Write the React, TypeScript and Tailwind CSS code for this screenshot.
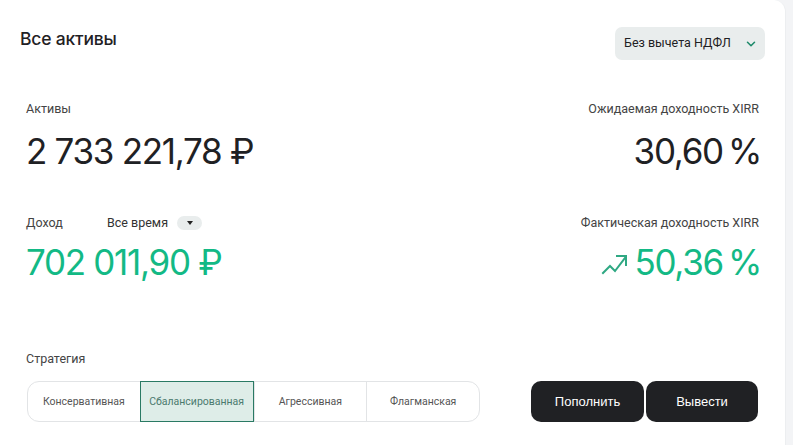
import React from "react";

const roboto = { fontFamily: "Roboto, 'Noto Sans', sans-serif" };
const big = "text-[35px] leading-[40px] tracking-[-1.3px]";

export default function App() {
  const strategies = ["Консервативная", "Сбалансированная", "Агрессивная", "Флагманская"];
  return (
    <div className="w-[793px] h-[445px] bg-[#f3f4f6] overflow-hidden" style={{ fontFamily: "Inter, 'Noto Sans', sans-serif" }}>
      <div className="w-[786px] h-[460px] bg-white rounded-tr-[12px] border-r border-[#eceef0] flex flex-col">
        <div className="flex justify-between items-start pl-[20px] pr-[20px] pt-[27px]">
          <div className="text-[17.5px] font-medium text-[#1f2124] leading-[22px] pt-[1px] tracking-[-0.2px]">Все активы</div>
          <div className="w-[150px] h-[33px] bg-[#e9eded] rounded-[7px] flex items-center justify-between pl-[9px] pr-[7px]">
            <span className="text-[12.5px] text-[#1f2124]" style={roboto}>Без вычета НДФЛ</span>
            <svg width="14" height="14" viewBox="0 0 24 24" fill="none" stroke="#1d8a6a" strokeWidth="2.6" strokeLinecap="round" strokeLinejoin="round">
              <path d="M6 9l6 6 6-6" />
            </svg>
          </div>
        </div>

        <div className="flex justify-between pl-[26px] pr-[26px] mt-[41px]">
          <div className="flex flex-col">
            <div className="text-[12.5px] text-[#444] leading-[16px]" style={roboto}>Активы</div>
            <div className={big + " text-[#1f2124] mt-[14px]"}>2 733 221,78 ₽</div>
          </div>
          <div className="flex flex-col items-end">
            <div className="text-[12.5px] text-[#444] leading-[16px]" style={roboto}>Ожидаемая доходность XIRR</div>
            <div className={big + " text-[#1f2124] mt-[14px] -mr-[2px]"}>30,60{"\u2009"}%</div>
          </div>
        </div>

        <div className="flex justify-between pl-[26px] pr-[26px] mt-[44px]">
          <div className="flex flex-col">
            <div className="flex items-center h-[16px]" style={roboto}>
              <span className="text-[12.5px] text-[#444] w-[81px]">Доход</span>
              <span className="text-[12.5px] text-[#333]">Все время</span>
              <span className="ml-[9px] w-[25px] h-[14px] bg-[#e9eded] rounded-full flex items-center justify-center">
                <svg width="6" height="4" viewBox="0 0 6 4"><path d="M0 0h6L3 4z" fill="#222" /></svg>
              </span>
            </div>
            <div className={big + " text-[#13b985] mt-[11px]"}>702 011,90 ₽</div>
          </div>
          <div className="flex flex-col items-end">
            <div className="text-[12.5px] text-[#444] leading-[16px]" style={roboto}>Фактическая доходность XIRR</div>
            <div className="flex items-center mt-[11px] -mr-[2px]">
              <svg width="27" height="22" viewBox="0 0 27 22" fill="none" stroke="#2fa883" strokeWidth="2" strokeLinecap="square" strokeLinejoin="miter" className="mr-[6px] mt-[4px]">
                <path d="M2 20l7-7 5 5 10-13" />
                <path d="M16 3h9v9" />
              </svg>
              <div className={big + " text-[#13b985]"}>50,36{"\u2009"}%</div>
            </div>
          </div>
        </div>

        <div className="pl-[26px] mt-[69px] text-[12.5px] text-[#444] leading-[16px]" style={roboto}>Стратегия</div>

        <div className="flex items-center pl-[27px] pr-[27px] mt-[14px]">
          <div className="w-[453px] h-[41px] border border-[#e2e4e6] rounded-[12px] flex" style={roboto}>
            {strategies.map((s, i) => {
              const active = i === 1;
              return (
                <div
                  key={s}
                  className={
                    "flex-1 flex items-center justify-center text-[10.5px] " +
                    (active
                      ? "bg-[#deede8] border border-[#2a7a64] -my-[1px] text-[#4b7a6e]"
                      : "text-[#555] " + (i > 1 ? "border-l border-[#e2e4e6]" : ""))
                  }
                >
                  {s}
                </div>
              );
            })}
          </div>
          <div className="flex ml-auto gap-[2px]" style={{ fontFamily: "'Liberation Sans', Arial, sans-serif" }}>
            <button className="w-[113px] h-[41px] bg-[#202124] rounded-[10px] text-white text-[13px] font-medium">Пополнить</button>
            <button className="w-[112px] h-[41px] bg-[#202124] rounded-[10px] text-white text-[13px] font-medium">Вывести</button>
          </div>
        </div>
      </div>
    </div>
  );
}
